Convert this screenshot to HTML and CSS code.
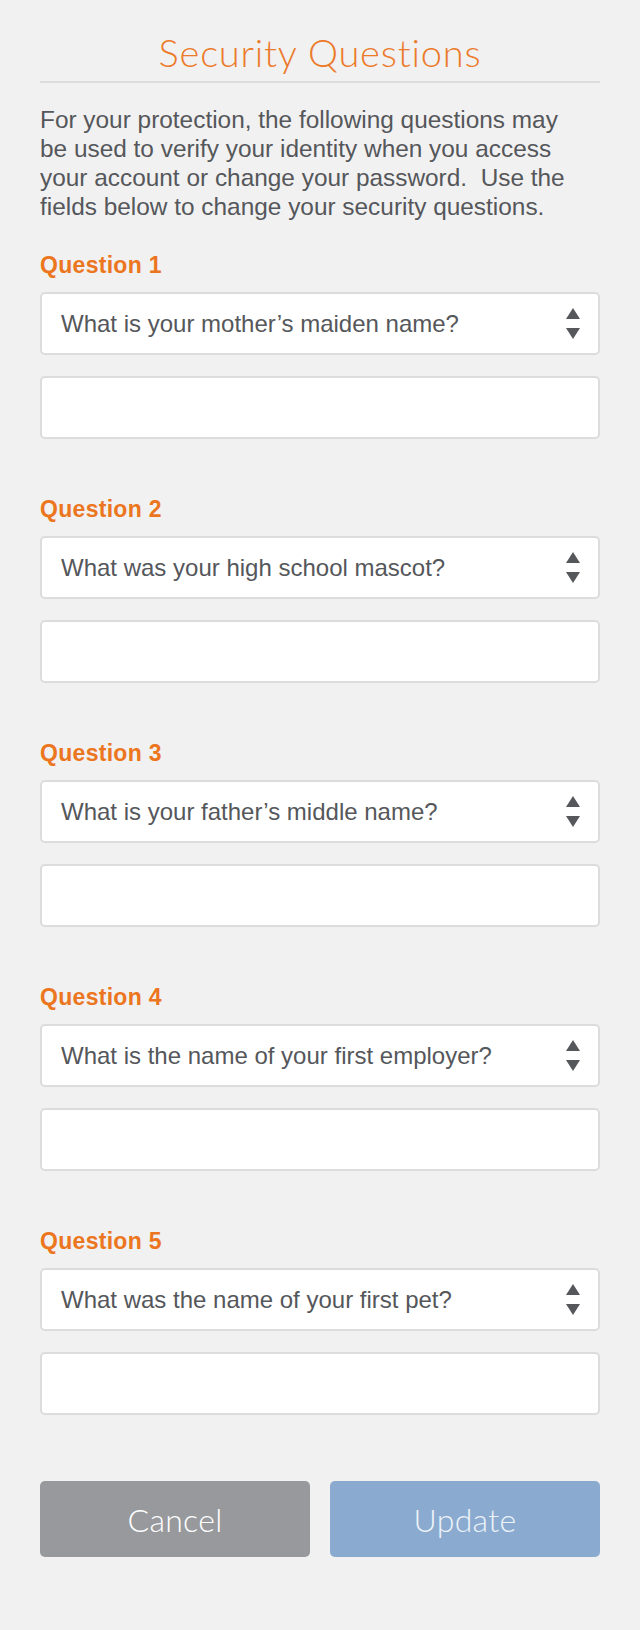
FILE: index.html
```html
<!DOCTYPE html>
<html lang="en">
<head>
<meta charset="utf-8">
<title>Security Questions</title>
<link rel="stylesheet" href="styles.css">
</head>
<body>
<main class="page">
  <h1 class="title">Security Questions</h1>
  <p class="intro">For your protection, the following questions may be used to verify your identity when you access your account or change your password.&nbsp; Use the fields below to change your security questions.</p>

  <div class="questions">
    <section class="question">
      <h2 class="q-label">Question 1</h2>
      <div class="select-box">
        <select class="q-select"><option>What is your mother’s maiden name?</option></select>
        <svg class="arrows" width="14" height="32" viewBox="0 0 14 32"><path d="M7 0 L14 11 L0 11 Z"/><path d="M0 20 L14 20 L7 31 Z"/></svg>
      </div>
      <input class="answer" type="text">
    </section>

    <section class="question">
      <h2 class="q-label">Question 2</h2>
      <div class="select-box">
        <select class="q-select"><option>What was your high school mascot?</option></select>
        <svg class="arrows" width="14" height="32" viewBox="0 0 14 32"><path d="M7 0 L14 11 L0 11 Z"/><path d="M0 20 L14 20 L7 31 Z"/></svg>
      </div>
      <input class="answer" type="text">
    </section>

    <section class="question">
      <h2 class="q-label">Question 3</h2>
      <div class="select-box">
        <select class="q-select"><option>What is your father’s middle name?</option></select>
        <svg class="arrows" width="14" height="32" viewBox="0 0 14 32"><path d="M7 0 L14 11 L0 11 Z"/><path d="M0 20 L14 20 L7 31 Z"/></svg>
      </div>
      <input class="answer" type="text">
    </section>

    <section class="question">
      <h2 class="q-label">Question 4</h2>
      <div class="select-box">
        <select class="q-select"><option>What is the name of your first employer?</option></select>
        <svg class="arrows" width="14" height="32" viewBox="0 0 14 32"><path d="M7 0 L14 11 L0 11 Z"/><path d="M0 20 L14 20 L7 31 Z"/></svg>
      </div>
      <input class="answer" type="text">
    </section>

    <section class="question">
      <h2 class="q-label">Question 5</h2>
      <div class="select-box">
        <select class="q-select"><option>What was the name of your first pet?</option></select>
        <svg class="arrows" width="14" height="32" viewBox="0 0 14 32"><path d="M7 0 L14 11 L0 11 Z"/><path d="M0 20 L14 20 L7 31 Z"/></svg>
      </div>
      <input class="answer" type="text">
    </section>
  </div>

  <div class="actions">
    <button class="btn btn-cancel" type="button">Cancel</button>
    <button class="btn btn-update" type="button">Update</button>
  </div>
</main>
</body>
</html>
```
FILE: styles.css
```css
html, body {
  margin: 0;
  padding: 0;
  background: #f1f1f1;
}

.page {
  padding: 31px 40px 60px;
  font-family: "Liberation Sans", Arial, sans-serif;
  color: #55575b;
}

.title {
  margin: 0;
  padding-bottom: 8px;
  border-bottom: 2px solid #dcdcdc;
  font-family: Lato, "Open Sans", sans-serif;
  font-weight: 300;
  font-size: 38px;
  letter-spacing: 0.8px;
  line-height: 42px;
  text-align: center;
  color: #ec7a2b;
}

.intro {
  margin: 22px 0 0;
  padding-right: 24px;
  font-size: 24.4px;
  line-height: 29px;
  color: #55575b;
}

.questions {
  margin-top: 31px;
  display: flex;
  flex-direction: column;
  gap: 57px;
}

.question {
  display: flex;
  flex-direction: column;
}

.q-label {
  margin: 0 0 14px;
  font-size: 23px;
  letter-spacing: 0.3px;
  line-height: 26px;
  font-weight: 700;
  color: #ec7520;
}

.select-box {
  height: 63px;
  box-sizing: border-box;
  border: 2px solid #dcdcdc;
  border-radius: 5px;
  background: #fff;
  display: flex;
  align-items: center;
  padding: 0 18px 0 0;
}

.q-select {
  flex: 1;
  appearance: none;
  -webkit-appearance: none;
  border: none;
  background: transparent;
  font-family: "Liberation Sans", Arial, sans-serif;
  font-size: 24px;
  color: #55575b;
  padding: 0 0 0 19px;
  height: 100%;
  outline: none;
}

.arrows {
  fill: #55575b;
  flex: none;
}

.answer {
  margin-top: 21px;
  height: 63px;
  box-sizing: border-box;
  border: 2px solid #dcdcdc;
  border-radius: 5px;
  background: #fff;
  font-size: 24px;
  padding: 0 19px;
  outline: none;
}

.actions {
  margin-top: 66px;
  display: grid;
  grid-template-columns: 1fr 1fr;
  gap: 20px;
}

.btn {
  height: 76px;
  border: none;
  border-radius: 5px;
  font-family: Lato, "Open Sans", sans-serif;
  font-weight: 300;
  font-size: 32px;
  letter-spacing: 0.3px;
  color: #fff;
}

.btn-cancel {
  background: #98999d;
}

.btn-update {
  background: #8aabcf;
  color: #eef3f9;
}
```
